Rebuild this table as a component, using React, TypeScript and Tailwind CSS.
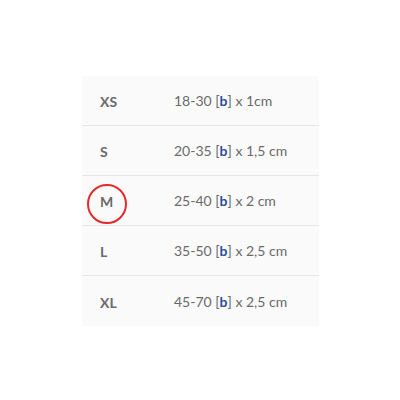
import React from 'react';

const sizes = [
  { label: 'XS', range: '18-30', dim: 'x 1cm' },
  { label: 'S', range: '20-35', dim: 'x 1,5 cm' },
  { label: 'M', range: '25-40', dim: 'x 2 cm', marked: true },
  { label: 'L', range: '35-50', dim: 'x 2,5 cm' },
  { label: 'XL', range: '45-70', dim: 'x 2,5 cm' },
];

export default function App() {
  return (
    <div className="w-[400px] h-[400px] bg-white pt-[76px] pl-[82px]" style={{ fontFamily: 'Lato, "Open Sans", sans-serif' }}>
      <div className="w-[237px] bg-[#fafafa]">
        {sizes.map((s, i) => (
          <div
            key={s.label}
            className={`flex items-center h-[50px] text-[14px] text-[#6a6a6a] ${i < sizes.length - 1 ? 'border-b border-[#e6e6e6]' : 'h-[49px]'}`}
          >
            <div className="relative w-[92px] pl-[18px] pt-[2px] font-bold">
              {s.marked && (
                <span className="absolute left-[5px] top-[-5px] w-[40px] h-[40px] rounded-full border-2 border-[#e62a2a]" />
              )}
              <span className="relative">{s.label}</span>
            </div>
            <div>
              {s.range} [<b className="text-[#2b4d9f]">b</b>] {s.dim}
            </div>
          </div>
        ))}
      </div>
    </div>
  );
}
